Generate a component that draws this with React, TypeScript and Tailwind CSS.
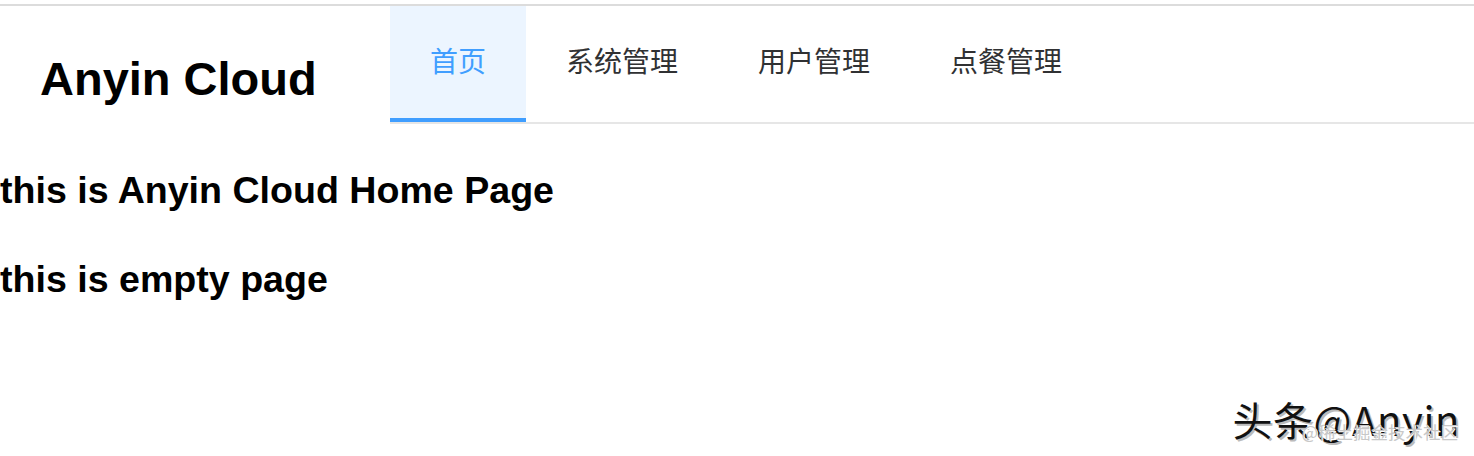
const menuItems = ['首页', '系统管理', '用户管理', '点餐管理'];

const cjk = "font-['Noto_Sans_CJK_SC','Liberation_Sans',sans-serif]";

const App: React.FC = () => {
  const active = 0;

  return (
    <div className="relative h-[456px] w-full overflow-hidden bg-white font-['Liberation_Sans',Arial,sans-serif] text-black">
      <div className="pt-[4px]">
        <div className="h-[2px] bg-[#dcdcdc]" />
      </div>

      <header className="flex h-[118px]">
        <div className="w-[390px] shrink-0 pl-[40px] pt-[49px]">
          <div className="text-[47px] font-bold leading-none">Anyin Cloud</div>
        </div>
        <nav className="flex flex-1 border-b-2 border-[#e6e6e6]">
          {menuItems.map((item, i) => (
            <div
              key={item}
              className={`${cjk} h-[116px] px-[40px] text-[28px] leading-[108px] ${
                i === active
                  ? 'border-b-4 border-[#409eff] bg-[#ecf5ff] text-[#409eff]'
                  : 'text-[#303133]'
              }`}
            >
              {item}
            </div>
          ))}
        </nav>
      </header>

      <main>
        <h3 className="mt-[48px] text-[37.6px] font-bold leading-none">this is Anyin Cloud Home Page</h3>
        <h3 className="mt-[51px] text-[37.6px] font-bold leading-none">this is empty page</h3>
      </main>

      <div className="absolute right-[14px] bottom-[17px]">
        <div
          className={`${cjk} text-[40px] leading-none tracking-[0.6px] text-[#111] [text-shadow:2px_2px_0_#bbb,-1px_-1px_0_#fff]`}
        >
          头条@Anyin
        </div>
        <div
          className={`${cjk} absolute right-[2px] bottom-[-1px] text-[17.5px] leading-none text-[#c8c8c8] [text-shadow:1px_1px_0_#fff]`}
        >
          @稀土掘金技术社区
        </div>
      </div>
    </div>
  );
};

export default App;
